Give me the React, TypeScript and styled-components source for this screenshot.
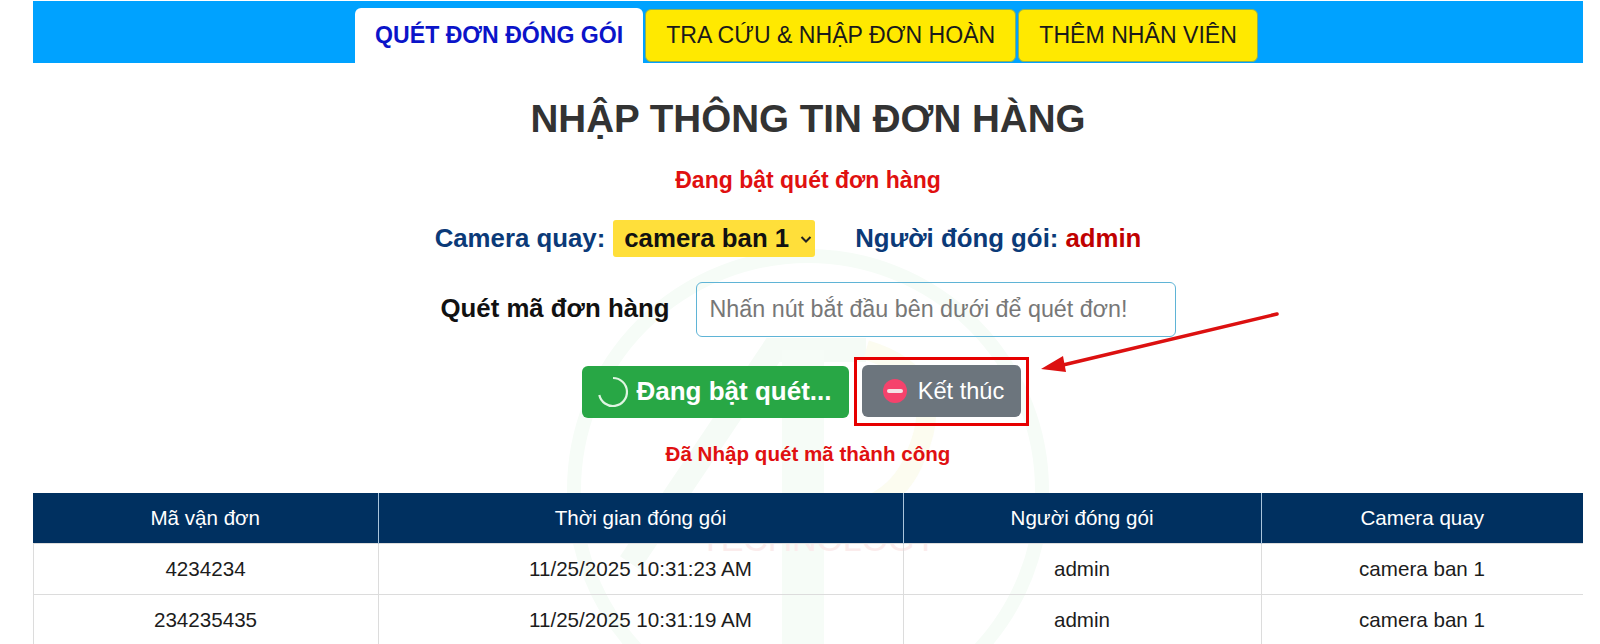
import { FC } from "react";
import styled, { createGlobalStyle } from "styled-components";

const GlobalStyle = createGlobalStyle`
  html, body {
    margin: 0;
    padding: 0;
    background: #fff;
    overflow: hidden;
    font-family: "Liberation Sans", Arial, sans-serif;
  }
`;

const Page = styled.div`
  position: relative;
  width: 1550px;
  height: 644px;
  margin-left: 33px;
  padding-top: 1px;
  box-sizing: border-box;
  overflow: hidden;
`;

const Watermark = styled.svg`
  position: absolute;
  left: 533px;
  top: 245px;
  width: 484px;
  height: 399px;
  pointer-events: none;
`;

const NavBar = styled.nav`
  display: flex;
  justify-content: center;
  align-items: flex-end;
  gap: 2px;
  height: 62px;
  padding-right: 3px;
  box-sizing: border-box;
  background: #00a2ff;
`;

const Tab = styled.div<{ $active?: boolean }>`
  display: flex;
  align-items: center;
  justify-content: center;
  box-sizing: border-box;
  font-size: 23.1px;
  height: ${({ $active }) => ($active ? "55px" : "53px")};
  margin-bottom: ${({ $active }) => ($active ? "0" : "1px")};
  padding: 0 20px;
  white-space: nowrap;
  border-radius: ${({ $active }) => ($active ? "6px 6px 0 0" : "6px")};
  background: ${({ $active }) => ($active ? "#fff" : "#ffe900")};
  color: ${({ $active }) => ($active ? "#0b14c9" : "#1a1a1a")};
  font-weight: ${({ $active }) => ($active ? 700 : 400)};
  border: ${({ $active }) => ($active ? "none" : "1px solid #8ab05a")};
`;

const Content = styled.main`
  position: relative;
  display: flex;
  flex-direction: column;
  align-items: center;
`;

const Title = styled.h1`
  margin: 34px 0 0;
  font-size: 38.6px;
  line-height: 44px;
  font-weight: 700;
  color: #333;
`;

const StatusText = styled.p`
  margin: 0;
  color: #e01010;
  font-weight: 700;
`;

const TopStatus = styled(StatusText)`
  margin-top: 26px;
  font-size: 23px;
  line-height: 26px;
`;

const CameraRow = styled.div`
  display: flex;
  align-items: center;
  height: 37px;
  margin-top: 27px;
  padding-right: 40px;
  font-size: 25.8px;
  font-weight: 700;
  color: #0b3a78;
`;

const CameraSelect = styled.div`
  display: flex;
  align-items: center;
  height: 37px;
  margin: 0 40px 0 8px;
  padding: 0 3px 0 11px;
  box-sizing: border-box;
  gap: 11px;
  background: #ffdf3a;
  border-radius: 3px;
  color: #111;
`;

const AdminName = styled.span`
  color: #c00000;
  margin-left: 7px;
`;

const ScanRow = styled.div`
  display: flex;
  align-items: center;
  margin-top: 25px;
`;

const ScanLabel = styled.label`
  margin-right: 26px;
  margin-top: -3px;
  font-size: 25.8px;
  font-weight: 700;
  color: #111;
`;

const ScanInput = styled.div`
  display: flex;
  align-items: center;
  width: 480px;
  height: 55px;
  box-sizing: border-box;
  padding: 0 13px;
  border: 1px solid #5fb4d6;
  border-radius: 6px;
  font-size: 23.3px;
  color: #777;
  white-space: nowrap;
`;

const ButtonRow = styled.div`
  display: flex;
  align-items: center;
  gap: 5px;
  margin-top: 20px;
  padding-right: 5px;
`;

const ActionButton = styled.button<{ $tone: "green" | "gray" }>`
  display: flex;
  align-items: center;
  justify-content: center;
  height: 52px;
  box-sizing: border-box;
  border: none;
  border-radius: 6px;
  color: #fff;
  font-family: inherit;
  background: ${({ $tone }) => ($tone === "green" ? "#28a745" : "#6c757d")};
  font-size: ${({ $tone }) => ($tone === "green" ? "26px" : "23.6px")};
  font-weight: ${({ $tone }) => ($tone === "green" ? 700 : 400)};
  width: ${({ $tone }) => ($tone === "green" ? "267px" : "159px")};
  gap: ${({ $tone }) => ($tone === "green" ? "8px" : "11px")};
  padding: ${({ $tone }) => ($tone === "green" ? "0" : "0 0 0 4px")};
`;

const Spinner = styled.svg`
  width: 32px;
  height: 32px;
  margin-left: -3px;
`;

const StopIcon = styled.span`
  position: relative;
  display: block;
  width: 24px;
  height: 24px;
  border-radius: 50%;
  background: #f5426c;

  &::after {
    content: "";
    position: absolute;
    left: 4px;
    right: 4px;
    top: 10px;
    height: 4px;
    border-radius: 2px;
    background: #f4e3e6;
  }
`;

const Highlight = styled.div`
  padding: 5px 5px 6px;
  border: 3px solid #e60000;
`;

const Arrow = styled.svg`
  position: absolute;
  left: 1000px;
  top: 245px;
  width: 260px;
  height: 80px;
  overflow: visible;
`;

const BottomStatus = styled(StatusText)`
  margin-top: 15px;
  font-size: 20.6px;
  line-height: 25px;
`;

const OrderTable = styled.table`
  width: 1550px;
  margin-top: 27px;
  border-collapse: collapse;
  table-layout: fixed;
  font-size: 20.6px;
`;

const HeaderCell = styled.th`
  height: 50px;
  padding: 0;
  font-weight: 400;
  background: #003060;
  color: #fff;
  border-left: 1px solid #a9c4dc;
  border-right: 1px solid #a9c4dc;
  &:first-child {
    border-left: none;
  }
  &:last-child {
    border-right: none;
  }
`;

const BodyCell = styled.td`
  height: 50px;
  padding: 0;
  text-align: center;
  color: #1c1c1c;
  border: 1px solid #dcdcdc;
`;

interface OrderRow {
  code: string;
  time: string;
  packer: string;
  camera: string;
}

const ORDERS: OrderRow[] = [
  { code: "4234234", time: "11/25/2025 10:31:23 AM", packer: "admin", camera: "camera ban 1" },
  { code: "234235435", time: "11/25/2025 10:31:19 AM", packer: "admin", camera: "camera ban 1" },
];

const App: FC = () => {
  return (
    <>
      <GlobalStyle />
      <Page>
        <Watermark viewBox="0 0 484 399" fill="none">
          <circle cx="242" cy="245" r="234" stroke="#f6fcf7" strokeWidth="14" />
          <path d="M64 318 L207 105 L300 105" stroke="#f5fbf6" strokeWidth="24" />
          <path d="M237 105 L237 399" stroke="#f6fcf7" strokeWidth="42" />
          <path d="M300 105 Q385 130 350 210 Q330 265 262 270" stroke="#fcfcf0" strokeWidth="20" />
          <text x="134" y="306" fontFamily="Liberation Sans" fontSize="34" fill="#fbecec" textLength="237">
            TECHNOLOGY
          </text>
        </Watermark>
        <NavBar>
          <Tab $active>QUÉT ĐƠN ĐÓNG GÓI</Tab>
          <Tab>TRA CỨU &amp; NHẬP ĐƠN HOÀN</Tab>
          <Tab>THÊM NHÂN VIÊN</Tab>
        </NavBar>
        <Content>
          <Title>NHẬP THÔNG TIN ĐƠN HÀNG</Title>
          <TopStatus>Đang bật quét đơn hàng</TopStatus>
          <CameraRow>
            Camera quay:
            <CameraSelect>
              camera ban 1
              <svg width="12" height="12" viewBox="0 0 12 12" fill="none">
                <path d="M1.5 4 L6 8.5 L10.5 4" stroke="#222" strokeWidth="2" />
              </svg>
            </CameraSelect>
            Người đóng gói:
            <AdminName>admin</AdminName>
          </CameraRow>
          <ScanRow>
            <ScanLabel>Quét mã đơn hàng</ScanLabel>
            <ScanInput>Nhấn nút bắt đầu bên dưới để quét đơn!</ScanInput>
          </ScanRow>
          <ButtonRow>
            <ActionButton $tone="green">
              <Spinner viewBox="0 0 32 32" fill="none">
                <path d="M16 2 A14 14 0 1 1 2.3 19" stroke="#dff5e2" strokeWidth="2.2" />
              </Spinner>
              Đang bật quét...
            </ActionButton>
            <Highlight>
              <ActionButton $tone="gray">
                <StopIcon />
                Kết thúc
              </ActionButton>
            </Highlight>
          </ButtonRow>
          <BottomStatus>Đã Nhập quét mã thành công</BottomStatus>
          <OrderTable>
            <colgroup>
              <col style={{ width: 345 }} />
              <col style={{ width: 525 }} />
              <col style={{ width: 358 }} />
              <col style={{ width: 322 }} />
            </colgroup>
            <thead>
              <tr>
                <HeaderCell>Mã vận đơn</HeaderCell>
                <HeaderCell>Thời gian đóng gói</HeaderCell>
                <HeaderCell>Người đóng gói</HeaderCell>
                <HeaderCell>Camera quay</HeaderCell>
              </tr>
            </thead>
            <tbody>
              {ORDERS.map((order) => (
                <tr key={order.code}>
                  <BodyCell>{order.code}</BodyCell>
                  <BodyCell>{order.time}</BodyCell>
                  <BodyCell>{order.packer}</BodyCell>
                  <BodyCell>{order.camera}</BodyCell>
                </tr>
              ))}
            </tbody>
          </OrderTable>
          <Arrow viewBox="0 0 260 80" fill="none">
            <path d="M244 6 L30 57" stroke="#dc1010" strokeWidth="3.5" strokeLinecap="round" />
            <path d="M8 61 L33 64 L30 48 Z" fill="#dc1010" />
          </Arrow>
        </Content>
      </Page>
    </>
  );
};

export default App;
